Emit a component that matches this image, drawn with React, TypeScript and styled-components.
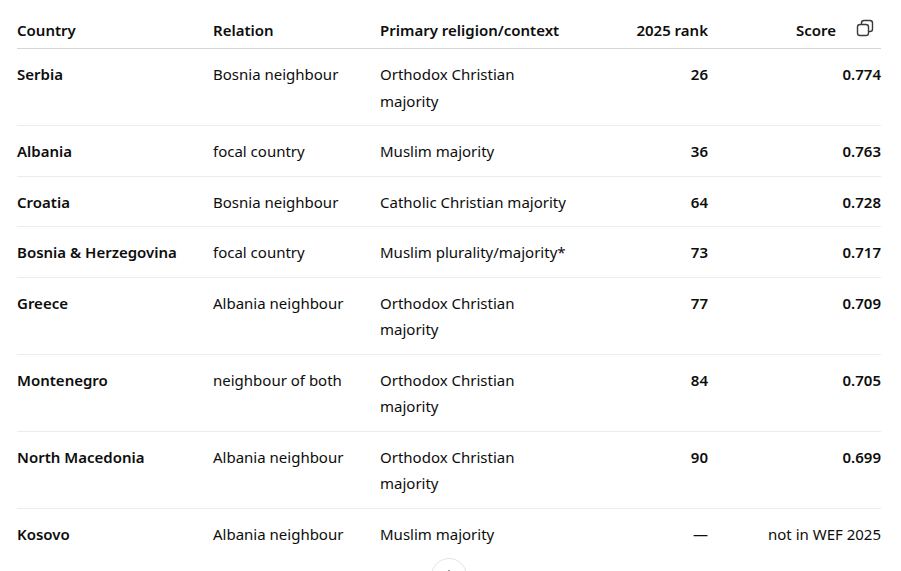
import styled, { createGlobalStyle } from "styled-components";

const GlobalStyle = createGlobalStyle`
  html, body {
    margin: 0;
    padding: 0;
    background: #ffffff;
  }
  body {
    font-family: "Noto Sans", "Open Sans", "Liberation Sans", sans-serif;
    color: #0d0d0d;
    overflow: hidden;
  }
`;

type Row = {
  country: string;
  relation: string;
  context: string;
  rank: string;
  score: string;
  plainScore?: boolean;
};

const rows: Row[] = [
  { country: "Serbia", relation: "Bosnia neighbour", context: "Orthodox Christian majority", rank: "26", score: "0.774" },
  { country: "Albania", relation: "focal country", context: "Muslim majority", rank: "36", score: "0.763" },
  { country: "Croatia", relation: "Bosnia neighbour", context: "Catholic Christian majority", rank: "64", score: "0.728" },
  { country: "Bosnia & Herzegovina", relation: "focal country", context: "Muslim plurality/majority*", rank: "73", score: "0.717" },
  { country: "Greece", relation: "Albania neighbour", context: "Orthodox Christian majority", rank: "77", score: "0.709" },
  { country: "Montenegro", relation: "neighbour of both", context: "Orthodox Christian majority", rank: "84", score: "0.705" },
  { country: "North Macedonia", relation: "Albania neighbour", context: "Orthodox Christian majority", rank: "90", score: "0.699" },
  { country: "Kosovo", relation: "Albania neighbour", context: "Muslim majority", rank: "—", score: "not in WEF 2025", plainScore: true },
];

const CopyIcon = () => (
  <svg width="20" height="20" viewBox="0 0 20 20" fill="none" stroke="#3a3a3a" strokeWidth="1.4">
    <rect x="6.5" y="2.5" width="11" height="11" rx="2.6" />
    <rect x="2.5" y="6.5" width="11" height="11" rx="2.6" fill="#ffffff" />
  </svg>
);

const ArrowDown = () => (
  <svg width="16" height="16" viewBox="0 0 16 16" fill="none" stroke="#0d0d0d" strokeWidth="1.6" strokeLinecap="round">
    <path d="M8 3v10M3.5 8.5L8 13l4.5-4.5" />
  </svg>
);

export default function App() {
  return (
    <>
      <GlobalStyle />
      <Page>
        <Table>
          <colgroup>
            <col style={{ width: 196 }} />
            <col style={{ width: 167 }} />
            <col style={{ width: 208 }} />
            <col style={{ width: 136 }} />
            <col style={{ width: 157 }} />
          </colgroup>
          <thead>
            <tr>
              <Th>Country</Th>
              <Th>Relation</Th>
              <Th>Primary religion/context</Th>
              <Th $right>2025 rank</Th>
              <Th $right $last>
                <ScoreHead>
                  Score
                  <CopyButton aria-label="Copy table">
                    <CopyIcon />
                  </CopyButton>
                </ScoreHead>
              </Th>
            </tr>
          </thead>
          <tbody>
            {rows.map((r) => (
              <Tr key={r.country}>
                <Td $bold>{r.country}</Td>
                <Td>{r.relation}</Td>
                <Td>{r.context}</Td>
                <Td $right $bold={r.rank !== "—"}>{r.rank}</Td>
                <Td $right $last $bold={!r.plainScore}>{r.score}</Td>
              </Tr>
            ))}
          </tbody>
        </Table>
        <ScrollButton aria-label="Scroll down">
          <ArrowDown />
        </ScrollButton>
      </Page>
    </>
  );
}

const Page = styled.div`
  position: relative;
  height: 571px;
  padding: 0 20px 0 17px;
  box-sizing: border-box;
`;

const Table = styled.table`
  width: 864px;
  border-collapse: collapse;
  table-layout: fixed;
  font-size: 15px;
  line-height: 26.5px;
`;

const Th = styled.th<{ $right?: boolean; $last?: boolean }>`
  text-align: ${(p) => (p.$right ? "right" : "left")};
  font-weight: 600;
  padding: 17px ${(p) => (p.$last ? "0" : "16px")} 4.5px 0;
  border-bottom: 1px solid #d6d6d6;
  white-space: nowrap;
  vertical-align: bottom;
`;

const ScoreHead = styled.div`
  display: flex;
  justify-content: flex-end;
  align-items: center;
  gap: 19px;
  margin-right: 6px;
`;

const CopyButton = styled.span`
  display: inline-flex;
  width: 20px;
  height: 20px;
  margin-top: -4px;
`;

const Tr = styled.tr`
  border-bottom: 1px solid #ececec;

  &:last-child {
    border-bottom: none;
  }
`;

const Td = styled.td<{ $right?: boolean; $last?: boolean; $bold?: boolean }>`
  text-align: ${(p) => (p.$right ? "right" : "left")};
  font-weight: ${(p) => (p.$bold ? 600 : 400)};
  padding: 12px ${(p) => (p.$last ? "0" : "16px")} 11px 0;
  vertical-align: top;
`;

const ScrollButton = styled.div`
  position: absolute;
  left: 431px;
  top: 558px;
  width: 36px;
  height: 36px;
  border-radius: 50%;
  border: 1px solid #e3e3e3;
  background: #ffffff;
  display: flex;
  align-items: center;
  justify-content: center;
  box-sizing: border-box;
`;
